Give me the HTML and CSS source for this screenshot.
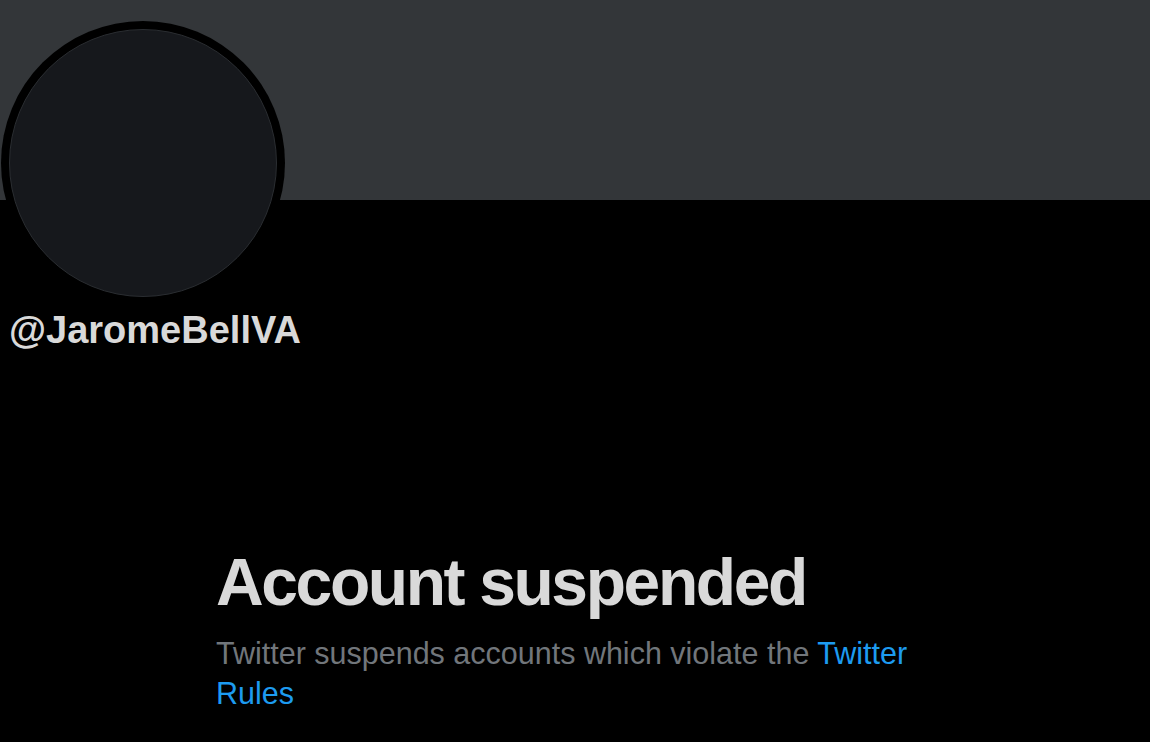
FILE: index.html
```html
<!DOCTYPE html>
<html lang="en">
<head>
<meta charset="utf-8">
<title>@JaromeBellVA</title>
<link rel="stylesheet" href="styles.css">
</head>
<body>
<div class="page">
  <div class="banner"></div>
  <div class="profile">
    <div class="avatar"><div class="avatar-inner"></div></div>
    <div class="handle">@JaromeBellVA</div>
  </div>
  <div class="notice">
    <h1 class="notice-title">Account suspended</h1>
    <p class="notice-text">Twitter suspends accounts which violate the <a class="notice-link" href="#">Twitter Rules</a></p>
  </div>
</div>
</body>
</html>
```

FILE: styles.css
```css
html, body {
  margin: 0;
  padding: 0;
  background: #000;
}
body {
  width: 1150px;
  height: 742px;
  overflow: hidden;
  font-family: "Liberation Sans", Arial, sans-serif;
}
.page {
  display: flex;
  flex-direction: column;
}
.banner {
  height: 200px;
  background: #333639;
}
.profile {
  display: flex;
  flex-direction: column;
  align-items: flex-start;
  margin-top: -179px;
  padding-left: 1px;
}
.avatar {
  width: 284px;
  height: 284px;
  border-radius: 50%;
  background: #000;
  display: flex;
  align-items: center;
  justify-content: center;
}
.avatar-inner {
  width: 266px;
  height: 266px;
  border-radius: 50%;
  background: #16181c;
  border: 1px solid #2a2d31;
}
.handle {
  margin-top: 3px;
  margin-left: 8px;
  font-size: 38px;
  font-weight: 700;
  line-height: 44px;
  color: #d9d9d9;
}
.notice {
  margin-top: 192px;
  margin-left: 216px;
  width: 700px;
}
.notice-title {
  margin: 0;
  font-size: 66px;
  font-weight: 700;
  line-height: 76px;
  letter-spacing: -2.4px;
  color: #d9d9d9;
}
.notice-text {
  margin: 13px 0 0;
  font-size: 30.5px;
  line-height: 40px;
  color: #71767b;
}
.notice-link {
  color: #1d9bf0;
  text-decoration: none;
}
```
